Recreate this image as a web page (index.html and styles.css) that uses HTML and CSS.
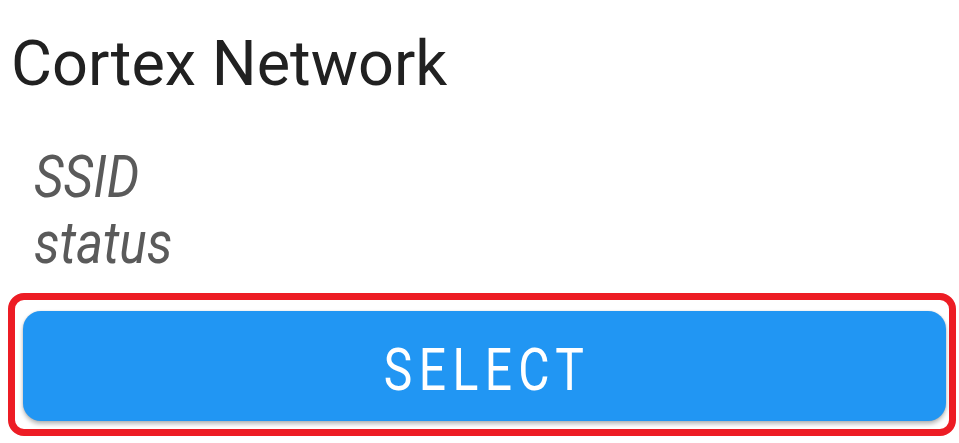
FILE: index.html
```html
<!DOCTYPE html>
<html>
<head>
<meta charset="utf-8">
<link rel="stylesheet" href="styles.css">
</head>
<body>
<div class="card">
  <h1 class="title">Cortex Network</h1>
  <div class="details">
    <div class="detail"><span class="cond">SSID</span></div>
    <div class="detail"><span class="cond">status</span></div>
  </div>
  <div class="highlight">
    <button class="select-btn"><span class="btn-label">SELECT</span></button>
  </div>
</div>
</body>
</html>
```

FILE: styles.css
```css
html, body {
  margin: 0;
  padding: 0;
  background: #ffffff;
}
body {
  width: 959px;
  height: 443px;
  overflow: hidden;
  font-family: Roboto, "Liberation Sans", sans-serif;
}
.card {
  display: flex;
  flex-direction: column;
  padding: 0 0 0 8px;
}
.title {
  margin: 27px 0 0 3px;
  font-size: 63px;
  font-weight: 400;
  line-height: 74px;
  color: #212121;
  height: 74px;
}
.details {
  display: flex;
  flex-direction: column;
  margin: 43px 0 0 26px;
}
.detail {
  font-size: 59px;
  line-height: 66px;
  height: 66px;
  font-style: italic;
  color: #5a5a5a;
}
.cond {
  display: inline-block;
  transform: scaleX(0.87);
  transform-origin: left center;
}
.highlight {
  margin-top: 17px;
  width: 948px;
  height: 143px;
  box-sizing: border-box;
  border: 7px solid #ed1c24;
  border-radius: 16px;
  padding: 11px 3px 8px 8px;
  display: flex;
}
.select-btn {
  flex: 1;
  border: none;
  border-radius: 18px;
  background: #2196f3;
  box-shadow: 0 3px 4px rgba(0, 0, 0, 0.28), 0 0 2px rgba(0, 0, 0, 0.12);
  color: #ffffff;
  font-family: Roboto, "Liberation Sans", sans-serif;
  font-size: 60px;
  font-weight: 400;
  letter-spacing: 8px;
  padding: 6px 0 0 6px;
  display: flex;
  align-items: center;
  justify-content: center;
}
.btn-label {
  display: inline-block;
  transform: scaleX(0.8);
}
```
